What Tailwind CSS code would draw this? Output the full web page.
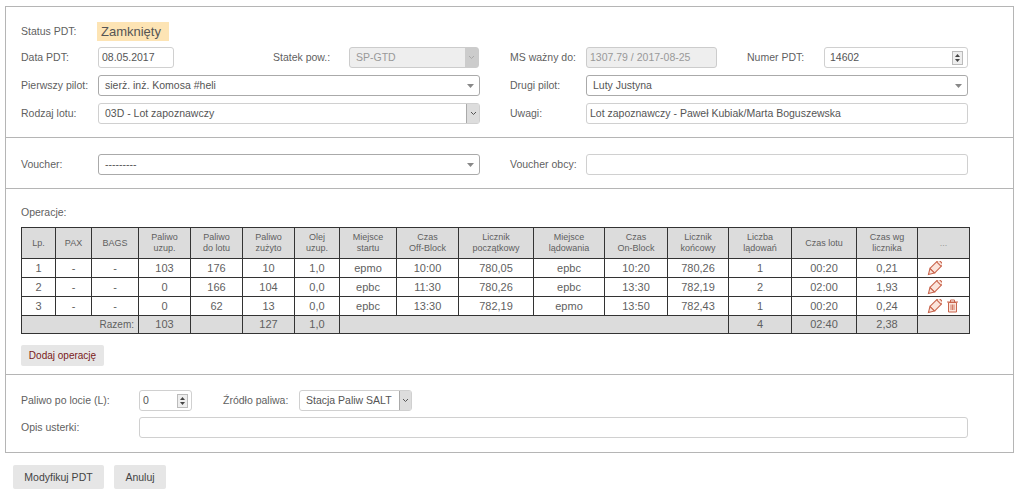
<!DOCTYPE html>
<html lang="pl">
<head>
<meta charset="utf-8">
<title>PDT</title>
<script src="https://cdn.jsdelivr.net/npm/@tailwindcss/browser@4"></script>
</head>
<body class="bg-white font-['Liberation_Sans',Arial,sans-serif] text-[10.500px] leading-none text-[#5f5f5f]">
<div class="w-[1024px] h-[499px] overflow-hidden pt-[6px] pl-[5px]">
  <form class="w-[1009px] h-[447px] border border-[#b5b5b5] flex flex-col">
    <!-- section 1 -->
    <section class="h-[131px] border-b border-[#b5b5b5] pl-[15px] pt-[14px] flex flex-col">
      <div class="h-[20px] flex items-center">
        <span class="w-[76px]">Status PDT:</span>
        <span class="w-[72px] h-[19px] bg-[#fde4b4] text-[13px] text-[#555] flex items-center pl-[4px]">Zamknięty</span>
      </div>
      <div class="mt-[6px] h-[21px] flex items-center">
        <span class="w-[77px]">Data PDT:</span>
        <div class="w-[76px] h-[21px] rounded-[3px] border border-[#d0d0d0] flex items-center pl-[3px] text-[#555]">08.05.2017</div>
        <span class="ml-[99px] w-[76px]">Statek pow.:</span>
        <div class="w-[130px] h-[21px] rounded-[3px] border border-[#ccc] bg-[#eee] flex items-center pl-[6px] text-[#999]">
          <span class="grow">SP-GTD</span>
          <span class="w-[13px] h-[19px] bg-[#ccc] flex items-center justify-center"><svg width="7" height="5" viewBox="0 0 7 5"><path d="M1 1l2.500 2.500L6 1" fill="none" stroke="#aaa" stroke-width="1"/></svg></span>
        </div>
        <span class="ml-[31px] w-[76px]">MS ważny do:</span>
        <div class="w-[131px] h-[21px] rounded-[3px] border border-[#ccc] bg-[#eee] flex items-center pl-[3px] text-[#999]">1307.79 / 2017-08-25</div>
        <span class="ml-[30px] w-[77px]">Numer PDT:</span>
        <div class="w-[144px] h-[21px] rounded-[3px] border border-[#d0d0d0] flex items-center pl-[5px] pr-[4px] text-[#555]">
          <span class="grow">14602</span>
          <span class="w-[11px] h-[14px] border border-[#bbb] bg-[#eee] flex flex-col items-center justify-center gap-[2px]">
            <svg width="5" height="3" viewBox="0 0 5 3"><path d="M2.500 0L5 3H0z" fill="#444"/></svg>
            <svg width="5" height="3" viewBox="0 0 5 3"><path d="M0 0h5L2.500 3z" fill="#444"/></svg>
          </span>
        </div>
      </div>
      <div class="mt-[7px] h-[21px] flex items-center">
        <span class="w-[77px]">Pierwszy pilot:</span>
        <div class="w-[382px] h-[21px] rounded-[3px] border border-[#aaa] flex items-center pl-[6px] pr-[5px] text-[#555]">
          <span class="grow">sierż. inż. Komosa #heli</span>
          <svg width="7" height="4" viewBox="0 0 7 4"><path d="M0 0h7L3.500 4z" fill="#888"/></svg>
        </div>
        <span class="ml-[30px] w-[76px]">Drugi pilot:</span>
        <div class="w-[382px] h-[21px] rounded-[3px] border border-[#aaa] flex items-center pl-[6px] pr-[5px] text-[#555]">
          <span class="grow">Luty Justyna</span>
          <svg width="7" height="4" viewBox="0 0 7 4"><path d="M0 0h7L3.500 4z" fill="#888"/></svg>
        </div>
      </div>
      <div class="mt-[7px] h-[21px] flex items-center">
        <span class="w-[77px]">Rodzaj lotu:</span>
        <div class="w-[382px] h-[21px] rounded-[3px] border border-[#d0d0d0] flex items-center pl-[6px] text-[#555]">
          <span class="grow">03D - Lot zapoznawczy</span>
          <span class="w-[13px] h-[19px] bg-[#ddd] border-l border-[#aaa] flex items-center justify-center"><svg width="7" height="5" viewBox="0 0 7 5"><path d="M1 1l2.500 2.500L6 1" fill="none" stroke="#555" stroke-width="1"/></svg></span>
        </div>
        <span class="ml-[30px] w-[76px]">Uwagi:</span>
        <div class="w-[382px] h-[21px] rounded-[3px] border border-[#d0d0d0] flex items-center pl-[3px] text-[#555]">Lot zapoznawczy - Paweł Kubiak/Marta Boguszewska</div>
      </div>
    </section>
    <!-- section 2 -->
    <section class="h-[51px] border-b border-[#b5b5b5] pl-[15px] pt-[16px]">
      <div class="h-[21px] flex items-center">
        <span class="w-[77px]">Voucher:</span>
        <div class="w-[382px] h-[21px] rounded-[3px] border border-[#aaa] flex items-center pl-[6px] pr-[5px] text-[#555]">
          <span class="grow">---------</span>
          <svg width="7" height="4" viewBox="0 0 7 4"><path d="M0 0h7L3.500 4z" fill="#888"/></svg>
        </div>
        <span class="ml-[30px] w-[76px]">Voucher obcy:</span>
        <div class="w-[382px] h-[21px] rounded-[3px] border border-[#d0d0d0]"></div>
      </div>
    </section>
    <!-- section 3 -->
    <section class="h-[186px] border-b border-[#b5b5b5] pl-[15px] pt-[18px]">
      <div class="h-[11px]">Operacje:</div>
      <table class="mt-[9px] table-fixed border-collapse w-[948px] text-center text-[11px] [&_td]:border [&_td]:border-[#333] [&_th]:border [&_th]:border-[#333]">
        <colgroup>
          <col class="w-[34px]"><col class="w-[36px]"><col class="w-[47px]"><col class="w-[52px]"><col class="w-[52px]"><col class="w-[52px]"><col class="w-[45px]"><col class="w-[57px]"><col class="w-[62px]"><col class="w-[75px]"><col class="w-[71px]"><col class="w-[63px]"><col class="w-[61px]"><col class="w-[63px]"><col class="w-[65px]"><col class="w-[61px]"><col class="w-[52px]">
        </colgroup>
        <thead class="bg-[#dcdcdc] text-[9px] leading-[11px]">
          <tr class="h-[31px]">
            <th class="font-normal">Lp.</th><th class="font-normal">PAX</th><th class="font-normal">BAGS</th>
            <th class="font-normal">Paliwo<br>uzup.</th><th class="font-normal">Paliwo<br>do lotu</th><th class="font-normal">Paliwo<br>zużyto</th><th class="font-normal">Olej<br>uzup.</th>
            <th class="font-normal">Miejsce<br>startu</th><th class="font-normal">Czas<br>Off-Block</th><th class="font-normal">Licznik<br>początkowy</th><th class="font-normal">Miejsce<br>lądowania</th><th class="font-normal">Czas<br>On-Block</th><th class="font-normal">Licznik<br>końcowy</th><th class="font-normal">Liczba<br>lądowań</th><th class="font-normal">Czas lotu</th><th class="font-normal">Czas wg<br>licznika</th><th class="font-normal text-[#999]">...</th>
          </tr>
        </thead>
        <tbody>
          <tr class="h-[19px]">
            <td>1</td><td>-</td><td>-</td><td>103</td><td>176</td><td>10</td><td>1,0</td><td>epmo</td><td>10:00</td><td>780,05</td><td>epbc</td><td>10:20</td><td>780,26</td><td>1</td><td>00:20</td><td>0,21</td>
            <td class="pl-[9px]"><div class="flex">
              <svg class="w-[15px] h-[15px]" viewBox="0 0 14 14"><g transform="rotate(45 7 7)" fill="#fbe4db" stroke="#c9654d" stroke-width="1"><rect x="4" y="-1.500" width="6" height="11.500" rx="1"/><path d="M4 10L7 15l3-5z"/><path d="M4 1.200h6" fill="none"/></g></svg>
            </div></td>
          </tr>
          <tr class="h-[19px]">
            <td>2</td><td>-</td><td>-</td><td>0</td><td>166</td><td>104</td><td>0,0</td><td>epbc</td><td>11:30</td><td>780,26</td><td>epbc</td><td>13:30</td><td>782,19</td><td>2</td><td>02:00</td><td>1,93</td>
            <td class="pl-[9px]"><div class="flex">
              <svg class="w-[15px] h-[15px]" viewBox="0 0 14 14"><g transform="rotate(45 7 7)" fill="#fbe4db" stroke="#c9654d" stroke-width="1"><rect x="4" y="-1.500" width="6" height="11.500" rx="1"/><path d="M4 10L7 15l3-5z"/><path d="M4 1.200h6" fill="none"/></g></svg>
            </div></td>
          </tr>
          <tr class="h-[19px]">
            <td>3</td><td>-</td><td>-</td><td>0</td><td>62</td><td>13</td><td>0,0</td><td>epbc</td><td>13:30</td><td>782,19</td><td>epmo</td><td>13:50</td><td>782,43</td><td>1</td><td>00:20</td><td>0,24</td>
            <td class="pl-[9px]"><div class="flex gap-[4px]">
              <svg class="w-[15px] h-[15px]" viewBox="0 0 14 14"><g transform="rotate(45 7 7)" fill="#fbe4db" stroke="#c9654d" stroke-width="1"><rect x="4" y="-1.500" width="6" height="11.500" rx="1"/><path d="M4 10L7 15l3-5z"/><path d="M4 1.200h6" fill="none"/></g></svg>
              <svg class="w-[13px] h-[14px]" viewBox="0 0 13 14"><path d="M1 3h11M4.500 3V1h4v2" fill="none" stroke="#c9654d"/><path d="M2.500 3.500h8V13h-8z" fill="#fbe4db" stroke="#c9654d"/><path d="M5 5.500v5.500M6.500 5.500v5.500M8 5.500v5.500" stroke="#c9654d" stroke-width=".8"/></svg>
            </div></td>
          </tr>
          <tr class="h-[18px] bg-[#dcdcdc]">
            <td colspan="3" class="text-right text-[10px] pr-[4px]">Razem:</td><td>103</td><td></td><td>127</td><td>1,0</td>
            <td colspan="6"></td><td>4</td><td>02:40</td><td>2,38</td><td></td>
          </tr>
        </tbody>
      </table>
      <button type="button" class="mt-[11px] block w-[83px] h-[21px] bg-[#e6e6e6] rounded-[2px] text-[10px] text-[#7a2020]">Dodaj operację</button>
    </section>
    <!-- section 4 -->
    <section class="pl-[15px] pt-[15px]">
      <div class="h-[21px] flex items-center">
        <span class="w-[118px]">Paliwo po locie (L):</span>
        <div class="w-[53px] h-[21px] rounded-[3px] border border-[#d0d0d0] flex items-center pl-[3px] pr-[3px] text-[#555]">
          <span class="grow">0</span>
          <span class="w-[11px] h-[14px] border border-[#bbb] bg-[#eee] flex flex-col items-center justify-center gap-[2px]">
            <svg width="5" height="3" viewBox="0 0 5 3"><path d="M2.500 0L5 3H0z" fill="#444"/></svg>
            <svg width="5" height="3" viewBox="0 0 5 3"><path d="M0 0h5L2.500 3z" fill="#444"/></svg>
          </span>
        </div>
        <span class="ml-[31px] w-[76px]">Źródło paliwa:</span>
        <div class="w-[113px] h-[21px] rounded-[3px] border border-[#d0d0d0] flex items-center pl-[6px] text-[#555]">
          <span class="grow">Stacja Paliw SALT</span>
          <span class="w-[12px] h-[19px] bg-[#ddd] border-l border-[#aaa] flex items-center justify-center"><svg width="7" height="5" viewBox="0 0 7 5"><path d="M1 1l2.500 2.500L6 1" fill="none" stroke="#555" stroke-width="1"/></svg></span>
        </div>
      </div>
      <div class="mt-[6px] h-[21px] flex items-center">
        <span class="w-[118px]">Opis usterki:</span>
        <div class="w-[829px] h-[21px] rounded-[3px] border border-[#d0d0d0]"></div>
      </div>
    </section>
  </form>
  <div class="mt-[12px] ml-[8px] flex gap-[10px]">
    <button type="button" class="w-[91px] h-[24px] bg-[#e6e6e6] rounded-[2px] text-[10.500px] text-[#444]">Modyfikuj PDT</button>
    <button type="button" class="w-[52px] h-[24px] bg-[#e6e6e6] rounded-[2px] text-[10.500px] text-[#444]">Anuluj</button>
  </div>
</div>
</body>
</html>
